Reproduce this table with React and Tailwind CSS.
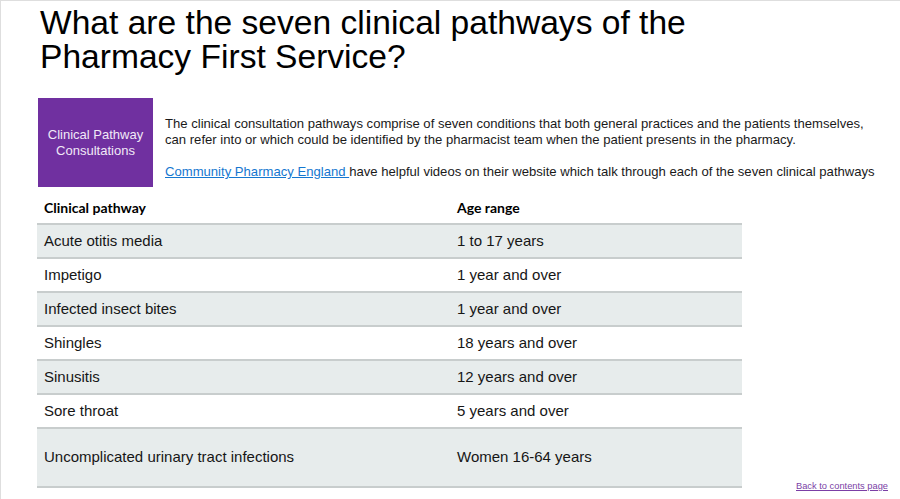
import React from 'react';

const rows = [
  { pathway: 'Acute otitis media', age: '1 to 17 years' },
  { pathway: 'Impetigo', age: '1 year and over' },
  { pathway: 'Infected insect bites', age: '1 year and over' },
  { pathway: 'Shingles', age: '18 years and over' },
  { pathway: 'Sinusitis', age: '12 years and over' },
  { pathway: 'Sore throat', age: '5 years and over' },
  { pathway: 'Uncomplicated urinary tract infections', age: 'Women 16-64 years', tall: true },
];

const App = () => {
  return (
    <div className="w-[900px] h-[499px] overflow-hidden bg-white border-t border-l border-[#dedede] font-['Liberation_Sans',Arial,sans-serif] text-[#111]">
      {/* Title */}
      <h1 className="pt-[5px] pl-[39px] text-[33.6px] leading-[34px] text-black">
        What are the seven clinical pathways of the
        <br />
        Pharmacy First Service?
      </h1>

      {/* Intro */}
      <div className="flex mt-[24px]">
        <div className="ml-[37px] w-[115px] h-[89px] shrink-0 bg-[#7030a0] flex items-center justify-center text-center text-[13px] leading-[16px] text-[#f1e9f7]">
          Clinical Pathway
          <br />
          Consultations
        </div>
        <div className="ml-[12px] pt-[18px] text-[13.1px] leading-[16px] text-[#1a1a1a]">
          <p>
            The clinical consultation pathways comprise of seven conditions that both general practices and the patients themselves,
            <br />
            can refer into or which could be identified by the pharmacist team when the patient presents in the pharmacy.
          </p>
          <p className="mt-[16px]">
            <a href="#" className="text-[#1577d0] underline">Community Pharmacy England </a>
            have helpful videos on their website which talk through each of the seven clinical pathways
          </p>
        </div>
      </div>

      {/* Table + footer link */}
      <div className="flex mt-[4px]">
        <div className="ml-[36px] w-[705px] border-b-2 border-[#c8cdcd]">
          <div className="grid grid-cols-[413px_292px] h-[32px] items-center font-['Lato',sans-serif] font-bold text-[14px] text-black">
            <div className="pl-[7px]">Clinical pathway</div>
            <div className="pl-[7px]">Age range</div>
          </div>
          {rows.map((r, i) => (
            <div
              key={r.pathway}
              className={`grid grid-cols-[413px_292px] items-center border-t-2 border-[#c8cdcd] text-[15px] text-[#161616] ${r.tall ? 'h-[59px]' : 'h-[34px]'} ${i % 2 === 0 ? 'bg-[#e7ecec]' : 'bg-white'}`}
            >
              <div className="pl-[7px]">{r.pathway}</div>
              <div className="pl-[7px]">{r.age}</div>
            </div>
          ))}
        </div>
        <a href="#" className="ml-auto mr-[12px] self-end mb-[-4px] text-[9.3px] leading-[12px] text-[#7b3fa6] underline">
          Back to contents page
        </a>
      </div>
    </div>
  );
};

export default App;
